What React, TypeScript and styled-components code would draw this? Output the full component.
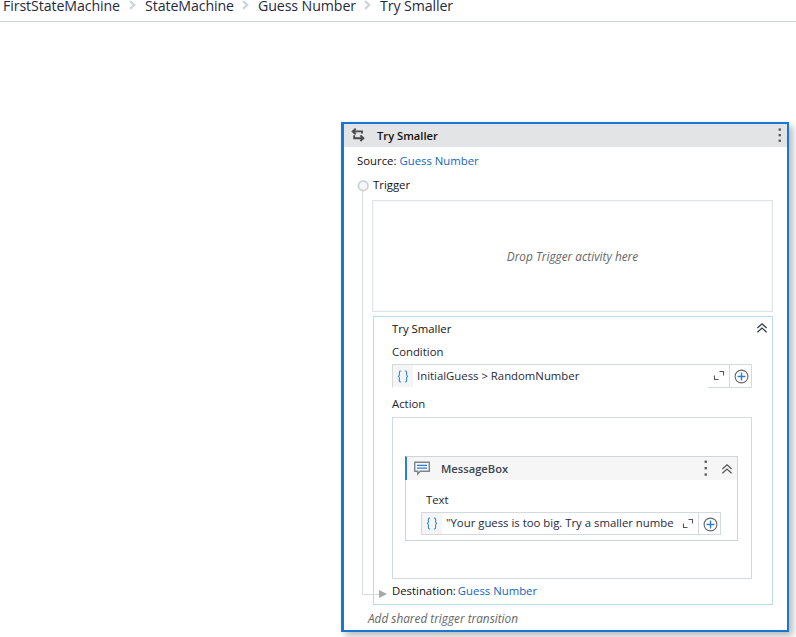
import React from "react";
import styled, { createGlobalStyle } from "styled-components";

const Global = createGlobalStyle`
  *, *::before, *::after { box-sizing: border-box; }
  html, body { margin: 0; background: #fff; overflow: hidden; }
  body { font: 11.35px/16px "Open Sans", "Noto Sans", sans-serif; color: #111; }
  svg { display: block; flex: none; }
`;

const Page = styled.div`
  width: 796px;
  height: 637px;
  overflow: hidden;
`;

const Breadcrumb = styled.nav`
  display: flex;
  align-items: center;
  height: 22px;
  padding: 0 0 10px 3px;
  border-bottom: 1px solid #c9d5db;
  font-size: 14.2px;
  letter-spacing: -0.1px;
  line-height: 20px;
  color: #1f2a3d;
  white-space: nowrap;
`;

const Crumb = styled.span<{ $width: number }>`
  width: ${(p) => p.$width}px;
`;

const Separator = styled.svg`
  margin: 0 8px 0 7px;
`;

const Canvas = styled.main`
  padding: 100px 0 0 341px;
`;

const TransitionCard = styled.section`
  display: flex;
  flex-direction: column;
  width: 448px;
  height: 510px;
  border: 2px solid #1976d2;
  border-left-width: 3px;
  background: #fff;
  box-shadow: 4px 4px 7px rgba(0, 0, 0, 0.27);
`;

const CardHeader = styled.header`
  display: flex;
  align-items: center;
  gap: 11px;
  height: 23px;
  padding: 0 5px 0 6px;
  background: #e3e4e5;
`;

const Heading = styled.h2<{ $color?: string }>`
  flex: 1;
  margin: 0;
  font-size: 11.2px;
  line-height: 16px;
  font-weight: 600;
  color: ${(p) => p.$color ?? "#111"};
`;

const SourceRow = styled.div`
  display: flex;
  align-items: center;
  gap: 3px;
  height: 28px;
  padding-left: 13px;
`;

const Link = styled.a`
  color: #1467c0;
`;

const Flow = styled.div`
  position: relative;
  display: flex;
  flex-direction: column;
  height: 430px;
  padding: 0 14px 0 28px;
`;

const Connector = styled.svg`
  position: absolute;
  left: 12px;
  top: 4px;
  z-index: 1;
`;

const TriggerLabel = styled.div`
  height: 25px;
  padding: 2px 0 0 1px;
`;

const DropZone = styled.div`
  display: flex;
  align-items: center;
  justify-content: center;
  height: 112px;
  margin-bottom: 4px;
  border: 1px solid #dfe4e8;
  box-shadow: inset 0 0 0 1px #f6f8f9;
`;

const Hint = styled.em`
  font-size: 11.8px;
  color: #666;
`;

const Branch = styled.section`
  display: flex;
  flex-direction: column;
  height: 289px;
  margin-left: 1px;
  padding: 0 20px 0 18px;
  border: 1px solid #b9dde8;
`;

const BranchHeader = styled.header`
  display: flex;
  align-items: center;
  justify-content: space-between;
  height: 24px;
  margin-right: -16px;

  svg {
    margin-bottom: 3px;
  }
`;

const Label = styled.div<{ $height: number; $top?: number }>`
  height: ${(p) => p.$height}px;
  padding-top: ${(p) => p.$top ?? 0}px;
  color: #1d2430;
`;

const FieldBox = styled.div<{ $height: number; $open?: boolean }>`
  display: flex;
  height: ${(p) => p.$height}px;
  border: 1px solid #d3dade;
  ${(p) =>
    p.$open &&
    `border-bottom-color: transparent;
     background: linear-gradient(#d3dade, #d3dade) right bottom / 44px 1px no-repeat border-box;`}
`;

const Braces = styled.span`
  display: flex;
  align-items: center;
  justify-content: center;
  width: 20px;
  padding-right: 1px;
  background: #f5f5f5;
`;

const Expression = styled.span<{ $lift: number }>`
  flex: 1;
  align-self: center;
  padding: 0 0 ${(p) => p.$lift}px 4px;
  overflow: hidden;
  white-space: nowrap;
  color: #1f2a3d;
`;

const ExpandButton = styled.span`
  display: flex;
  align-items: center;
  justify-content: center;
  width: 22px;
  padding-left: 1px;
`;

const AddButton = styled.span`
  display: flex;
  align-items: center;
  justify-content: center;
  width: 22px;
  padding: 1px 0 0 1px;
  border-left: 1px solid #d3dade;
`;

const ActionArea = styled.div`
  height: 162px;
  padding: 38px 13px 0 12px;
  border: 1px solid #d3dade;
`;

const Activity = styled.article`
  height: 85px;
  border: 1px solid #ccd5d9;
`;

const ActivityHeader = styled.header`
  display: flex;
  align-items: center;
  height: 24px;
  margin: -1px 0 0 -1px;
  padding-right: 4px;
  border-left: 2px solid #2b7fd8;
  border-top: 1px solid #ccd5d9;
  background: #f6f6f6;
`;

const HeaderTools = styled.span`
  display: flex;
  align-items: center;
  gap: 13px;
`;

const CommentGlyph = styled.svg`
  margin: 0 10px 2px 6px;
`;

const ActivityBody = styled.div`
  padding: 12px 16px 0 15px;
`;

const ActivityLabel = styled.div`
  height: 20px;
  padding-left: 5px;
  color: #1d2430;
`;

const Destination = styled.div`
  display: flex;
  gap: 2px;
  padding-top: 4px;
`;

const Footer = styled.footer`
  padding: 5px 0 0 24px;
`;

const Chevron = () => (
  <Separator width="9" height="11" viewBox="0 0 9 11" fill="none">
    <path d="M2 1.2 L6.2 5 L2 8.8" stroke="#cbd5db" strokeWidth="2.3" />
  </Separator>
);

const TransitionIcon = () => (
  <svg width="16" height="18" viewBox="0 0 16 18" fill="none" stroke="#4a4a4a" strokeWidth="1.9">
    <path d="M12 6.6V4.4H3M5.7 1.6L2.7 4.4L5.7 7.2" />
    <path d="M4.2 8.2V11.2H13.2M10.4 8.4L13.4 11.2L10.4 14" />
  </svg>
);

const Kebab = ({ color, step }: { color: string; step: number }) => (
  <svg width="4" height="17" viewBox="0 0 4 17" fill={color}>
    {[-1, 0, 1].map((i) => (
      <rect key={i} x="0.6" y={7 + i * step} width="2.3" height="2.3" />
    ))}
  </svg>
);

const Collapse = ({ color }: { color: string }) => (
  <svg width="12" height="12" viewBox="0 0 12 12" fill="none" stroke={color} strokeWidth="1.25">
    <path d="M1.4 6L6 1.8L10.6 6M1.4 10.2L6 6L10.6 10.2" />
  </svg>
);

const BracesIcon = () => (
  <svg width="12" height="13" viewBox="0 0 12 13" fill="none" stroke="#3287d8" strokeWidth="1.1">
    <path d="M4.2 1H3.5Q2.4 1 2.4 2.2V4.8Q2.4 6.3 1 6.5Q2.4 6.7 2.4 8.2V10.8Q2.4 12 3.5 12H4.2" />
    <path d="M7.8 1H8.5Q9.6 1 9.6 2.2V4.8Q9.6 6.3 11 6.5Q9.6 6.7 9.6 8.2V10.8Q9.6 12 8.5 12H7.8" />
  </svg>
);

const ExpandIcon = () => (
  <svg width="12" height="12" viewBox="0 0 12 12" fill="none" stroke="#555" strokeWidth="1.1">
    <path d="M6.5 1.5H10.5V5.5M1.5 5.5V9.5H5.5" />
  </svg>
);

const PlusIcon = () => (
  <svg width="15" height="15" viewBox="0 0 15 15" fill="none">
    <circle cx="7.5" cy="7.5" r="6.4" stroke="#666" strokeWidth="1.1" />
    <path d="M7.5 3.6V11.4M3.6 7.5H11.4" stroke="#2b7fd8" strokeWidth="1.4" />
  </svg>
);

const CommentIcon = () => (
  <CommentGlyph width="18" height="16" viewBox="0 0 18 16" fill="none">
    <path d="M1.7 2.2H16.3V11.2H7.2L4.7 14V11.2H1.7Z" stroke="#7d868c" strokeWidth="1.4" />
    <path d="M4 5.4H14M4 8.1H14" stroke="#2b7fd8" strokeWidth="1.3" />
  </CommentGlyph>
);

interface FieldProps {
  value: string;
  height: number;
  open?: boolean;
}

const ExpressionField = ({ value, height, open }: FieldProps) => (
  <FieldBox $height={height} $open={open}>
    <Braces>
      <BracesIcon />
    </Braces>
    <Expression $lift={open ? 0 : 1}>{value}</Expression>
    <ExpandButton>
      <ExpandIcon />
    </ExpandButton>
    <AddButton>
      <PlusIcon />
    </AddButton>
  </FieldBox>
);

const crumbs = [
  { name: "FirstStateMachine", width: 118 },
  { name: "StateMachine", width: 89 },
  { name: "Guess Number", width: 98 },
  { name: "Try Smaller", width: 74 },
];

export default function App() {
  return (
    <Page>
      <Global />
      <Breadcrumb>
        {crumbs.map((c, i) => (
          <React.Fragment key={c.name}>
            {i > 0 && <Chevron />}
            <Crumb $width={c.width}>{c.name}</Crumb>
          </React.Fragment>
        ))}
      </Breadcrumb>
      <Canvas>
        <TransitionCard>
          <CardHeader>
            <TransitionIcon />
            <Heading>Try Smaller</Heading>
            <Kebab color="#555" step={5.6} />
          </CardHeader>
          <SourceRow>
            <span>Source:</span>
            <Link>Guess Number</Link>
          </SourceRow>
          <Flow>
            <Connector width="34" height="422" viewBox="0 0 34 422" fill="none">
              <path d="M6.5 12V415.5H23" stroke="#d5dce0" />
              <circle cx="7.2" cy="6.8" r="4.8" fill="#f5f7f8" stroke="#ccd5d9" strokeWidth="1.9" />
              <path d="M23 411V419L31 415Z" fill="#a8a8a8" />
            </Connector>
            <TriggerLabel>Trigger</TriggerLabel>
            <DropZone>
              <Hint>Drop Trigger activity here</Hint>
            </DropZone>
            <Branch>
              <BranchHeader>
                <span>Try Smaller</span>
                <Collapse color="#2c3a4b" />
              </BranchHeader>
              <Label $height={23} $top={3}>Condition</Label>
              <ExpressionField value="InitialGuess > RandomNumber" height={24} open />
              <Label $height={29} $top={8}>Action</Label>
              <ActionArea>
                <Activity>
                  <ActivityHeader>
                    <CommentIcon />
                    <Heading $color="#3a4550">MessageBox</Heading>
                    <HeaderTools>
                      <Kebab color="#555" step={6.4} />
                      <Collapse color="#555" />
                    </HeaderTools>
                  </ActivityHeader>
                  <ActivityBody>
                    <ActivityLabel>Text</ActivityLabel>
                    <ExpressionField
                      value={'"Your guess is too big. Try a smaller numbe'}
                      height={23}
                    />
                  </ActivityBody>
                </Activity>
              </ActionArea>
              <Destination>
                <span>Destination:</span>
                <Link>Guess Number</Link>
              </Destination>
            </Branch>
          </Flow>
          <Footer>
            <Hint>Add shared trigger transition</Hint>
          </Footer>
        </TransitionCard>
      </Canvas>
    </Page>
  );
}
